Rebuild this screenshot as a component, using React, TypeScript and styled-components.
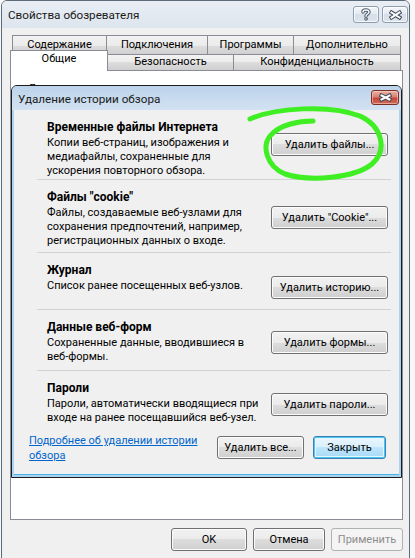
import React from "react";
import styled, { createGlobalStyle, css } from "styled-components";

const FONT = `Roboto, "Noto Sans", "Liberation Sans", sans-serif`;
const TEXT_SIZE = 11;

const GlobalStyle = createGlobalStyle`
  html, body { margin: 0; padding: 0; background: #f7f7f7; }
  body { font-family: ${FONT}; font-size: ${TEXT_SIZE}px; color: #000; }
  * { box-sizing: border-box; }
`;

const Screen = styled.div`
  width: 415px;
  height: 558px;
  overflow: hidden;
  display: flex;
  padding-left: 1px;
  background: #f7f7f7;
`;

const Window = styled.div`
  width: 409px;
  height: 600px;
  display: flex;
  flex-direction: column;
  border: 1px solid #5d6a7a;
  border-radius: 6px 6px 0 0;
  background: #f0f0f0;
`;

const TitleBar = styled.div`
  height: 27px;
  flex: none;
  display: flex;
  align-items: flex-start;
  justify-content: space-between;
  padding: 5px 1px 0 6px;
  border-radius: 5px 5px 0 0;
  background: linear-gradient(#e9eef4, #dde5ee);
`;

const TitleText = styled.div<{ $size: number }>`
  font-family: ${FONT};
  font-size: ${(p) => p.$size}px;
  line-height: 18px;
  color: #1a1a1a;
  white-space: nowrap;
`;

const TitleButtons = styled.div`
  display: flex;
  gap: 3px;
`;

const CaptionButton = styled.div`
  width: 26px;
  height: 17px;
  border: 1px solid #8e9db0;
  border-radius: 3px;
  background: linear-gradient(#f4f7fa 0%, #e3e9f0 50%, #d6dee8 50%, #dde4ec 100%);
  box-shadow: inset 0 0 0 1px rgba(255, 255, 255, 0.7);
  display: flex;
  align-items: center;
  justify-content: center;
`;

const RedClose = styled.div`
  width: 28px;
  height: 15px;
  border: 1px solid #7a2f27;
  border-radius: 3px;
  background: linear-gradient(#e9b2a5 0%, #d98170 45%, #c4473a 55%, #d06b58 100%);
  box-shadow: inset 0 0 0 1px rgba(255, 220, 210, 0.5);
  display: flex;
  align-items: center;
  justify-content: center;
`;

const Body = styled.div`
  flex: 1;
  display: flex;
  flex-direction: column;
  padding: 7px 6px 0 8px;
`;

const TabStrip = styled.div`
  display: flex;
  flex-direction: column;
`;

const TabRow = styled.div<{ $indent: number; $h: number; $top: number }>`
  display: flex;
  align-items: flex-end;
  height: ${(p) => p.$h}px;
  padding-left: ${(p) => p.$indent}px;
  margin-top: ${(p) => p.$top}px;
`;

const Tab = styled.div<{ $w: number; $h: number; $active?: boolean }>`
  position: relative;
  width: ${(p) => p.$w}px;
  height: ${(p) => p.$h}px;
  flex: none;
  margin-right: -1px;
  border: 1px solid #898c95;
  border-bottom: none;
  font-family: ${FONT};
  font-size: ${TEXT_SIZE}px;
  line-height: ${(p) => p.$h - 2}px;
  text-align: center;
  white-space: nowrap;
  color: #000;
  background: linear-gradient(#f2f2f2 0%, #ebebeb 50%, #dddddd 50%, #cfcfcf 100%);
  ${(p) =>
    p.$active &&
    css`
      z-index: 2;
      margin-bottom: -1px;
      background: #ffffff;
      line-height: ${p.$h - 6}px;
    `}
`;

const Panel = styled.div`
  position: relative;
  width: 393px;
  height: 450px;
  flex: none;
  background: #ffffff;
  border: 1px solid #898c95;
  padding: 10px 0 0 17px;
`;

const PanelLabel = styled.div`
  font-family: ${FONT};
  font-size: ${TEXT_SIZE}px;
  line-height: 15px;
  color: #000;
`;

const Dialog = styled.div`
  position: absolute;
  left: 0;
  top: 14px;
  width: 391px;
  height: 393px;
  display: flex;
  flex-direction: column;
  border: 1px solid #1c1c1c;
  border-radius: 6px 6px 0 0;
  background: #a9d3ee;
  padding: 0 2px 2px 2px;
`;

const DialogTitle = styled.div`
  height: 24px;
  flex: none;
  margin: 0 -2px;
  padding: 4px 2px 0 6px;
  display: flex;
  align-items: flex-start;
  justify-content: space-between;
  border-radius: 5px 5px 0 0;
  background: linear-gradient(#bcd3eb, #d3e2f2);
`;

const DialogContent = styled.div`
  flex: 1;
  display: flex;
  flex-direction: column;
  background: #f0f0f0;
  border-bottom: 1px solid #47b6e4;
`;

const Section = styled.div<{ $h: number; $last?: boolean }>`
  height: ${(p) => p.$h}px;
  flex: none;
  margin: 0 8px 0 23px;
  padding: 8px 3px 0 10px;
  display: grid;
  grid-template-columns: minmax(0, 1fr) 117px;
  grid-template-rows: 18px auto;
  border-bottom: ${(p) => (p.$last ? "none" : "1px solid #d2d2d2")};
`;

const SectionTitle = styled.div`
  grid-column: 1;
  grid-row: 1;
  font-family: ${FONT};
  font-weight: 700;
  font-size: 12px;
  line-height: 18px;
  white-space: nowrap;
`;

const SectionText = styled.div`
  grid-column: 1;
  grid-row: 2;
  font-family: ${FONT};
  font-size: ${TEXT_SIZE}px;
  line-height: 14px;
`;

const Line = styled.div`
  white-space: nowrap;
`;

const SectionAction = styled.div<{ $offset: number }>`
  grid-column: 2;
  grid-row: 1 / span 2;
  align-self: start;
  margin-top: ${(p) => p.$offset}px;
`;

const Button = styled.button<{ $w: number; $primary?: boolean }>`
  width: ${(p) => p.$w}px;
  height: 23px;
  padding: 0;
  font-family: ${FONT};
  font-size: ${TEXT_SIZE}px;
  color: #000;
  white-space: nowrap;
  border: 1px solid #707070;
  border-radius: 3px;
  background: linear-gradient(#f2f2f2 0%, #ebebeb 50%, #dddddd 50%, #cfcfcf 100%);
  box-shadow: inset 0 0 0 1px #fbfbfb;
  cursor: default;
  ${(p) =>
    p.$primary &&
    css`
      border-color: #3c7fb1;
      background: linear-gradient(#eaf6fd 0%, #d9f0fc 50%, #bee6fd 50%, #a7d9f5 100%);
      box-shadow: inset 0 0 0 1px #4cc6f3, inset 0 0 0 2px #e7f6fd;
    `}
  &:disabled {
    color: #8d8d8d;
    border-color: #adb2b5;
    background: #f4f4f4;
    box-shadow: none;
  }
`;

const Footer = styled.div`
  display: flex;
  align-items: flex-start;
  padding: 5px 13px 0 15px;
  gap: 9px;
`;

const HelpLink = styled.a`
  flex: 1;
  margin-top: -3px;
  font-family: ${FONT};
  font-size: ${TEXT_SIZE}px;
  line-height: 15px;
  color: #0066cc;
  text-decoration: underline;
  white-space: nowrap;
`;

const BottomBar = styled.div`
  display: flex;
  justify-content: flex-end;
  gap: 6px;
  padding: 8px 0 0 0;
`;

const Scribble = styled.svg`
  position: absolute;
  left: -1px;
  top: -1px;
  width: 391px;
  height: 393px;
  pointer-events: none;
  overflow: visible;
`;

const QuestionGlyph = () => (
  <svg width="12" height="13" viewBox="0 0 12 13">
    <g fill="none" strokeLinecap="round" strokeLinejoin="round">
      <path d="M3 4 C3 1.5 9 1.2 9 4 C9 6 6 6 6 8.2" stroke="#4d5b6d" strokeWidth="3.4" />
      <path d="M3 4 C3 1.5 9 1.2 9 4 C9 6 6 6 6 8.2" stroke="#ffffff" strokeWidth="1.4" />
      <circle cx="6" cy="11" r="1.3" fill="#fff" stroke="#4d5b6d" strokeWidth="1" />
    </g>
  </svg>
);

const CrossGlyph = ({ w, h }: { w: number; h: number }) => (
  <svg width={w} height={h} viewBox={`0 0 ${w} ${h}`}>
    <g fill="none" strokeLinecap="square">
      <path d={`M2.5 2.5 L${w - 2.5} ${h - 2.5} M${w - 2.5} 2.5 L2.5 ${h - 2.5}`} stroke="#3f4a58" strokeWidth="4" />
      <path d={`M2.5 2.5 L${w - 2.5} ${h - 2.5} M${w - 2.5} 2.5 L2.5 ${h - 2.5}`} stroke="#ffffff" strokeWidth="2" />
    </g>
  </svg>
);

type SectionData = {
  title: string;
  lines: string[];
  button: string;
  h: number;
  offset: number;
};

const sections: SectionData[] = [
  {
    title: "Временные файлы Интернета",
    lines: ["Копии веб-страниц, изображения и", "медиафайлы, сохраненные для", "ускорения повторного обзора."],
    button: "Удалить файлы...",
    h: 70,
    offset: 15,
  },
  {
    title: 'Файлы "cookie"',
    lines: ["Файлы, создаваемые веб-узлами для", "сохранения предпочтений, например,", "регистрационных данных о входе."],
    button: 'Удалить "Cookie"...',
    h: 73,
    offset: 18,
  },
  {
    title: "Журнал",
    lines: ["Список ранее посещенных веб-узлов."],
    button: "Удалить историю...",
    h: 57,
    offset: 15,
  },
  {
    title: "Данные веб-форм",
    lines: ["Сохраненные данные, вводившиеся в", "веб-формы."],
    button: "Удалить формы...",
    h: 61,
    offset: 13,
  },
  {
    title: "Пароли",
    lines: ["Пароли, автоматически вводящиеся при", "входе на ранее посещавшийся веб-узел."],
    button: "Удалить пароли...",
    h: 60,
    offset: 14,
  },
];

const topTabs = [
  { label: "Содержание", w: 95 },
  { label: "Подключения", w: 102 },
  { label: "Программы", w: 87 },
  { label: "Дополнительно", w: 108 },
];

const bottomTabs = [
  { label: "Общие", w: 98, active: true },
  { label: "Безопасность", w: 127 },
  { label: "Конфиденциальность", w: 168 },
];

export default function App() {
  return (
    <>
      <GlobalStyle />
      <Screen>
        <Window>
          <TitleBar>
            <TitleText $size={11.7}>Свойства обозревателя</TitleText>
            <TitleButtons>
              <CaptionButton>
                <QuestionGlyph />
              </CaptionButton>
              <CaptionButton>
                <CrossGlyph w={13} h={10} />
              </CaptionButton>
            </TitleButtons>
          </TitleBar>
          <Body>
            <TabStrip>
              <TabRow $indent={2} $h={20} $top={0}>
                {topTabs.map((t) => (
                  <Tab key={t.label} $w={t.w} $h={20}>
                    {t.label}
                  </Tab>
                ))}
              </TabRow>
              <TabRow $indent={0} $h={16} $top={-1}>
                {bottomTabs.map((t) => (
                  <Tab key={t.label} $w={t.w} $h={t.active ? 21 : 16} $active={t.active}>
                    {t.label}
                  </Tab>
                ))}
              </TabRow>
            </TabStrip>
            <Panel>
              <PanelLabel>Домашняя страница</PanelLabel>
              <Dialog>
                <DialogTitle>
                  <TitleText $size={11.7}>Удаление истории обзора</TitleText>
                  <RedClose>
                    <CrossGlyph w={13} h={9} />
                  </RedClose>
                </DialogTitle>
                <DialogContent>
                  {sections.map((s, i) => (
                    <Section key={s.title} $h={s.h} $last={i === sections.length - 1}>
                      <SectionTitle>{s.title}</SectionTitle>
                      <SectionText>
                        {s.lines.map((l) => (
                          <Line key={l}>{l}</Line>
                        ))}
                      </SectionText>
                      <SectionAction $offset={s.offset}>
                        <Button $w={117}>{s.button}</Button>
                      </SectionAction>
                    </Section>
                  ))}
                  <Footer>
                    <HelpLink href="#">
                      Подробнее об удалении истории
                      <br />
                      обзора
                    </HelpLink>
                    <Button $w={87}>Удалить все...</Button>
                    <Button $w={73} $primary>
                      Закрыть
                    </Button>
                  </Footer>
                </DialogContent>
                <Scribble viewBox="0 0 391 393">
                  <path
                    d="M239 34 C 264 23, 319 19, 349 31 C 371 41, 377 65, 361 79 C 344 93, 299 97, 274 89 C 255 81, 251 61, 259 51 C 269 39, 289 36, 302 36"
                    fill="none"
                    stroke="#40ee24"
                    strokeWidth="5"
                    strokeLinecap="round"
                    strokeLinejoin="round"
                  />
                </Scribble>
              </Dialog>
            </Panel>
            <BottomBar>
              <Button $w={76}>OK</Button>
              <Button $w={72}>Отмена</Button>
              <Button $w={72} disabled>
                Применить
              </Button>
            </BottomBar>
          </Body>
        </Window>
      </Screen>
    </>
  );
}
